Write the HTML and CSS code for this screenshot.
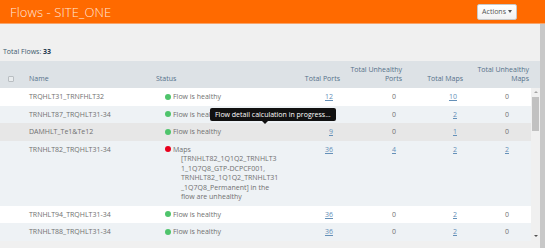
FILE: index.html
```html
<!DOCTYPE html>
<html lang="en">
<head>
  <meta charset="UTF-8">
  <title>Flows - SITE_ONE</title>
  <link rel="stylesheet" href="styles.css">
</head>
<body>
  <header class="topbar">
    <h1 class="title">Flows - SITE_ONE</h1>
    <button class="actions">Actions <span class="caret"></span></button>
  </header>

  <div class="page">
    <main class="content">
      <div class="summary">Total Flows: <b>33</b></div>

      <div class="grid">
        <div class="grid-head">
          <div class="cell check"><span class="box"></span></div>
          <div class="cell name">Name</div>
          <div class="cell status">Status</div>
          <div class="cell num">Total Ports</div>
          <div class="cell num">Total Unhealthy<br>Ports</div>
          <div class="cell num">Total Maps</div>
          <div class="cell num last">Total Unhealthy<br>Maps</div>
          <div class="cell"></div>
        </div>

        <div class="grid-body">
          <div class="rows">
            <div class="row">
              <div class="cell check"></div>
              <div class="cell name">TRQHLT31_TRNFHLT32</div>
              <div class="cell status"><span class="dot ok"></span><span>Flow is healthy</span></div>
              <div class="cell num p1"><a href="#">12</a></div>
              <div class="cell num p2">0</div>
              <div class="cell num p3"><a href="#">10</a></div>
              <div class="cell num p4">0</div>
            </div>
            <div class="row alt">
              <div class="cell check"></div>
              <div class="cell name">TRNHLT87_TRQHLT31-34</div>
              <div class="cell status"><span class="dot ok"></span><span>Flow is healthy</span></div>
              <div class="cell num p1"><a href="#">36</a></div>
              <div class="cell num p2">0</div>
              <div class="cell num p3"><a href="#">2</a></div>
              <div class="cell num p4">0</div>
            </div>
            <div class="row hover">
              <div class="cell check"></div>
              <div class="cell name">DAMHLT_Te1&amp;Te12</div>
              <div class="cell status"><span class="dot ok"></span><span>Flow is healthy</span></div>
              <div class="cell num p1"><a href="#">9</a></div>
              <div class="cell num p2">0</div>
              <div class="cell num p3"><a href="#">1</a></div>
              <div class="cell num p4">0</div>
            </div>
            <div class="row alt">
              <div class="cell check"></div>
              <div class="cell name">TRNHLT82_TRQHLT31-34</div>
              <div class="cell status">
                <span class="dot bad"></span>
                <div class="msg">
                  Maps
                  <div class="msg-detail">[TRNHLT82_1Q1Q2_TRNHLT3<br>1_1Q7Q8_GTP-DCPCF001,<br>TRNHLT82_1Q1Q2_TRNHLT31<br>_1Q7Q8_Permanent] in the<br>flow are unhealthy</div>
                </div>
              </div>
              <div class="cell num p1"><a href="#">36</a></div>
              <div class="cell num p2"><a href="#">4</a></div>
              <div class="cell num p3"><a href="#">2</a></div>
              <div class="cell num p4"><a href="#">2</a></div>
            </div>
            <div class="row">
              <div class="cell check"></div>
              <div class="cell name">TRNHLT94_TRQHLT31-34</div>
              <div class="cell status"><span class="dot ok"></span><span>Flow is healthy</span></div>
              <div class="cell num p1"><a href="#">36</a></div>
              <div class="cell num p2">0</div>
              <div class="cell num p3"><a href="#">2</a></div>
              <div class="cell num p4">0</div>
            </div>
            <div class="row alt">
              <div class="cell check"></div>
              <div class="cell name">TRNHLT88_TRQHLT31-34</div>
              <div class="cell status"><span class="dot ok"></span><span>Flow is healthy</span></div>
              <div class="cell num p1"><a href="#">36</a></div>
              <div class="cell num p2">0</div>
              <div class="cell num p3"><a href="#">2</a></div>
              <div class="cell num p4">0</div>
            </div>
          </div>

          <div class="vscroll">
            <span class="arrow up"></span>
            <div class="track"><div class="thumb"></div></div>
            <span class="arrow down"></span>
          </div>
        </div>
      </div>

      <div class="tooltip">Flow detail calculation in progress...</div>
    </main>
    <div class="page-scroll"></div>
  </div>
</body>
</html>
```

FILE: styles.css
```css
body {
  margin: 0;
  background: #f0f0f0;
  font-family: "Open Sans", Arial, sans-serif;
  font-size: 7px;
  color: #707070;
  overflow: hidden;
}
.topbar {
  height: 24px;
  background: #ff6a00;
  border-bottom: 1px solid #f7a46a;
  box-sizing: border-box;
  display: flex;
  align-items: center;
  justify-content: space-between;
  padding: 0 28px 0 10px;
}
.title {
  margin: 0;
  font-size: 13px;
  font-weight: 300;
  color: rgba(255, 255, 255, 0.85);
  letter-spacing: 0.1px;
}
.actions {
  height: 16px;
  padding: 0 4px;
  font-family: inherit;
  font-size: 7px;
  color: #555;
  background: linear-gradient(#fff, #f2f2f2);
  border: 1px solid #c8c8c8;
  border-radius: 2px;
  display: flex;
  align-items: center;
  gap: 2px;
}
.caret {
  border-left: 2.5px solid transparent;
  border-right: 2.5px solid transparent;
  border-top: 3px solid #555;
}
.page {
  display: flex;
}
.content {
  position: relative;
  width: 540px;
}
.page-scroll {
  width: 5px;
  height: 224px;
  background: #c8c8c8;
}
.summary {
  padding: 23px 3px 5px;
  line-height: 9px;
  color: #3d5a6e;
}
.summary b {
  color: #1f3a4d;
}
.grid-head {
  display: grid;
  grid-template-columns: 22px 128px 132px 63px 62px 61px 63px 9px;
  background: #dde2e6;
  color: #55718a;
  height: 27px;
  align-items: end;
}
.grid-head .cell {
  line-height: 9px;
  padding-bottom: 5px;
}
.grid-head .num {
  text-align: right;
  padding-right: 5px;
}
.grid-head .last {
  padding-right: 2px;
}
.grid-head .name {
  padding-left: 7px;
}
.grid-head .status {
  padding-left: 6px;
}
.box {
  display: block;
  width: 6px;
  height: 6px;
  margin-left: 8px;
  margin-bottom: 1px;
  border: 1px solid #b9bec2;
  border-radius: 1px;
  background: #e9ecee;
  box-sizing: border-box;
}
.grid-body {
  display: flex;
  height: 152px;
}
.rows {
  width: 531px;
}
.row {
  display: grid;
  grid-template-columns: 22px 128px 132px 63px 62px 61px 63px;
  background: #fff;
  line-height: 9.5px;
}
.row.alt {
  background: #eef2f5;
}
.row.hover {
  background: #e7e7e7;
}
.row .cell {
  padding: 4px 0;
}
.row .name {
  padding-left: 7px;
}
.row .status {
  padding-left: 15px;
  display: flex;
  align-items: flex-start;
}
.row .num {
  text-align: right;
}
.row .p1 { padding-right: 12px; }
.row .p2 { padding-right: 11px; }
.row .p3 { padding-right: 11px; }
.row .p4 { padding-right: 22px; }
.row a {
  color: #6590b8;
}
.dot {
  width: 6px;
  height: 6px;
  border-radius: 50%;
  margin: 1.7px 2px 0 0;
  flex: none;
}
.dot.ok {
  background: #4fc46c;
}
.dot.bad {
  background: #e8001c;
}
.msg-detail {
  padding-left: 8px;
}
.vscroll {
  width: 9px;
  background: #f0f0f0;
  display: flex;
  flex-direction: column;
  align-items: center;
}
.arrow {
  width: 0;
  height: 0;
  margin: 3px 0;
  border-left: 2px solid transparent;
  border-right: 2px solid transparent;
}
.arrow.up {
  border-bottom: 2px solid #a3a3a3;
}
.arrow.down {
  border-top: 2px solid #505050;
}
.track {
  flex: 1;
  width: 100%;
}
.thumb {
  margin: 1px 1px 0;
  height: 34px;
  background: #c1c1c1;
}
.tooltip {
  position: absolute;
  left: 210px;
  top: 84px;
  height: 13px;
  padding: 0 5px;
  line-height: 13px;
  background: #111;
  color: #fff;
  border-radius: 2px;
  white-space: nowrap;
}
.tooltip::after {
  content: "";
  position: absolute;
  left: 52px;
  bottom: -3px;
  border-left: 3px solid transparent;
  border-right: 3px solid transparent;
  border-top: 3px solid #111;
}
```
